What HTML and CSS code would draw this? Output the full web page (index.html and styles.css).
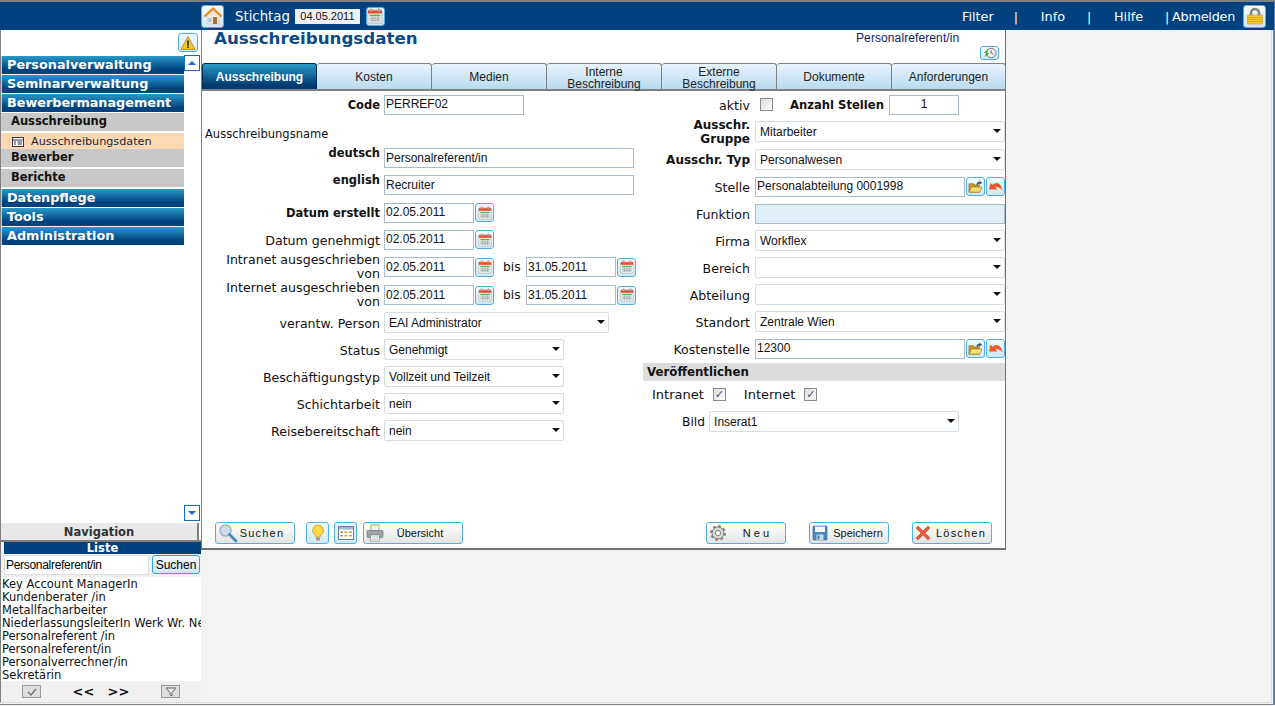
FILE: index.html
```html
<!DOCTYPE HTML>
<html>
<head>
<meta charset="utf-8">
<title>Ausschreibungsdaten</title>
<link rel="stylesheet" href="styles.css">
</head>
<body>
<svg class="defs" width="0" height="0">
  <symbol id="i-home" viewBox="0 0 20 20">
    <path d="M4 9.500 10 4l6 5.500V18H4z" fill="#efe9e0" stroke="#c8b8a0" stroke-width=".5"/>
    <path d="M1.500 10.500 10 2.500l8.500 8" fill="none" stroke="#ee8a20" stroke-width="2.200" stroke-linejoin="round"/>
    <rect x="10" y="11" width="4" height="7" fill="#a8703a"/>
    <rect x="5.500" y="12" width="3" height="4" fill="#8fb4d8"/>
    <path d="M7 12v4M5.500 14h3" stroke="#efe9e0" stroke-width=".5"/>
  </symbol>
  <symbol id="i-cal" viewBox="0 0 16 16">
    <rect x="1" y="2" width="14" height="13" rx="1" fill="#fff" stroke="#8a8a8a" stroke-width=".6"/>
    <rect x="1" y="2.500" width="14" height="3" fill="#e8482e"/>
    <rect x="3.500" y=".5" width="1.500" height="3.500" fill="#a0a0a0"/>
    <rect x="11" y=".5" width="1.500" height="3.500" fill="#a0a0a0"/>
    <rect x="2.500" y="6.500" width="11" height="2" fill="#58b858"/>
    <rect x="2.500" y="8.500" width="11" height="5.500" fill="#dfe6e2"/>
    <path d="M2.500 10.300h11M2.500 12.200h11M5.200 8.500V14M8 8.500V14M10.800 8.500V14" stroke="#8e9a9e" stroke-width=".6"/>
  </symbol>
  <symbol id="i-warn" viewBox="0 0 16 16">
    <path d="M8 1.500 15 14.500H1z" fill="#f6c81e" stroke="#a87a10" stroke-width=".7"/>
    <rect x="7.200" y="5.500" width="1.600" height="5" fill="#222"/>
    <rect x="7.200" y="11.300" width="1.600" height="1.600" fill="#222"/>
  </symbol>
  <symbol id="i-lock" viewBox="0 0 18 18">
    <path d="M5 9V6a4 4 0 0 1 8 0v3" fill="none" stroke="#858585" stroke-width="2.600"/>
    <rect x="1.500" y="8" width="15" height="9" rx="1" fill="#f6cd2e" stroke="#c2950f" stroke-width=".6"/>
    <path d="M2 10.500h14M2 12.500h14M2 14.500h14" stroke="#dba316" stroke-width=".9"/>
  </symbol>
  <symbol id="i-hist" viewBox="0 0 18 14">
    <circle cx="10.500" cy="7" r="5.500" fill="#f0f0f0" stroke="#666" stroke-width="1"/>
    <path d="M10.500 4v3l2.500 1.500" fill="none" stroke="#444" stroke-width=".9"/>
    <path d="M7 2 2 7h2.500L3 12l5-5H5.500z" fill="#3aa520"/>
  </symbol>
  <symbol id="i-folder" viewBox="0 0 16 16">
    <path d="M1 5h5l1 1.500h5V14H1z" fill="#c89a28" stroke="#7a5f18" stroke-width=".6"/>
    <path d="M3.500 8.500H15L12.500 14H1z" fill="#f8de78" stroke="#8a6a10" stroke-width=".6"/>
    <path d="M9 6.500C9 4 10.500 3 12 3V1.500L15 4l-3 2.500V5c-1 0-1.500.500-1.500 1.500z" fill="#3a5a80"/>
  </symbol>
  <symbol id="i-undo" viewBox="0 0 16 16">
    <path d="M1.500 11 2.500 4.500l2.500 2C8.500 3 13.500 4 15 11.500c-2.500-3-5.500-3.500-7.500-3l2 2.500z" fill="#f0552c" stroke="#d84418" stroke-width=".4"/>
  </symbol>
  <symbol id="i-search" viewBox="0 0 20 20">
    <circle cx="7.500" cy="7.500" r="5.500" fill="#ccdcf2" stroke="#a4b6cc" stroke-width="1.600"/>
    <path d="m11.500 11.500 6.500 6.500" stroke="#4a88c0" stroke-width="2.800" stroke-linecap="round"/>
  </symbol>
  <symbol id="i-bulb" viewBox="0 0 14 18">
    <path d="M7 1a5.500 5.500 0 0 0-3 10c.6.500 1 1.200 1 2h4c0-.800.400-1.500 1-2A5.500 5.500 0 0 0 7 1z" fill="#ffd94a" stroke="#c79a10" stroke-width=".8"/>
    <rect x="5" y="13.500" width="4" height="3" rx=".5" fill="#999"/>
  </symbol>
  <symbol id="i-table" viewBox="0 0 16 14">
    <rect x=".5" y=".5" width="15" height="13" fill="#fff" stroke="#607d9c"/>
    <rect x="1" y="1" width="14" height="2.500" fill="#9cbcdc"/>
    <path d="M2.500 5.500h2v1.500h-2z" fill="#d04030"/>
    <path d="M2.500 9h2v1.500h-2z" fill="#40a040"/>
    <path d="M6.500 5.500h3v1.500h-3zM11 5.500h3v1.500h-3zM6.500 9h3v1.500h-3zM11 9h3v1.500h-3z" fill="#c8a830"/>
  </symbol>
  <symbol id="i-print" viewBox="0 0 18 18">
    <rect x="5" y="1" width="8" height="6" fill="#f4f4f4" stroke="#888" stroke-width=".7"/>
    <rect x="1" y="6.500" width="16" height="7" rx="1" fill="#9ea4aa" stroke="#6a7076" stroke-width=".7"/>
    <rect x="4.500" y="11" width="9" height="6" fill="#fff" stroke="#888" stroke-width=".7"/>
    <path d="M6 13h6M6 15h6" stroke="#aaa" stroke-width=".7"/>
  </symbol>
  <symbol id="i-gear" viewBox="0 0 18 18">
    <circle cx="9" cy="9" r="6" fill="#d8d8d8" stroke="#808080" stroke-width="1"/>
    <circle cx="9" cy="9" r="6.800" fill="none" stroke="#808080" stroke-width="2.200" stroke-dasharray="2.700 2.640"/>
    <circle cx="9" cy="9" r="2.600" fill="#fff" stroke="#808080" stroke-width="1"/>
  </symbol>
  <symbol id="i-save" viewBox="0 0 16 16">
    <rect x="1" y="1" width="14" height="14" rx="1" fill="#4f86bd" stroke="#2f5f90" stroke-width=".6"/>
    <rect x="3" y="1.500" width="10" height="5.500" fill="#f2f6fa"/>
    <rect x="4.500" y="9.500" width="7" height="5.500" fill="#c9d9e8"/>
    <rect x="5.500" y="10.500" width="2" height="4" fill="#4f86bd"/>
  </symbol>
  <symbol id="i-cross" viewBox="0 0 16 16">
    <path d="m1 3 2-2 5 5 5-5 2 2-5 5 5 5-2 2-5-5-5 5-2-2 5-5z" fill="#ee5a3a" stroke="#b83418" stroke-width=".5"/>
  </symbol>
  <symbol id="i-list" viewBox="0 0 12 10">
    <rect x=".5" y=".5" width="11" height="9" fill="#fff" stroke="#334"/>
    <path d="M.5 3h11M2 5h2M5.500 5H10M2 7h2M5.500 7H10" stroke="#334"/>
  </symbol>
</svg>

<div class="topbar">
  <button class="icon-btn home"><svg width="20" height="20"><use href="#i-home"/></svg></button>
  <span class="stichtag">Stichtag</span>
  <span class="stichtag-date">04.05.2011</span>
  <button class="icon-btn cal-top"><svg width="16" height="16"><use href="#i-cal"/></svg></button>
  <nav class="topnav">
    <a>Filter</a><span class="sep sep1">|</span>
    <a>Info</a><span class="sep sep2">|</span>
    <a>Hilfe</a><span class="sep sep3">|</span>
    <a class="logout">Abmelden</a>
  </nav>
  <button class="icon-btn lock"><svg width="18" height="18"><use href="#i-lock"/></svg></button>
</div>

<div class="page">
  <aside class="sidebar">
    <div class="nav-panel">
      <div class="warn-row">
        <button class="icon-btn warn"><svg width="16" height="16"><use href="#i-warn"/></svg></button>
      </div>
      <div class="nav-scroll">
        <ul class="menu">
          <li class="m1">Personalverwaltung</li>
          <li class="m1">Seminarverwaltung</li>
          <li class="m1">Bewerbermanagement</li>
          <li class="m2">Ausschreibung</li>
          <li class="m3"><svg width="12" height="10"><use href="#i-list"/></svg>Ausschreibungsdaten</li>
          <li class="m2 m2-tight">Bewerber</li>
          <li class="m2">Berichte</li>
          <li class="m1">Datenpflege</li>
          <li class="m1">Tools</li>
          <li class="m1">Administration</li>
        </ul>
        <div class="scroller">
          <button class="scroll-btn"><span class="tri-up"></span></button>
          <button class="scroll-btn"><span class="tri-down"></span></button>
        </div>
      </div>
      <div class="nav-title">Navigation</div>
    </div>
    <div class="list-panel">
      <div class="list-title">Liste</div>
      <div class="list-search">
        <input class="list-input" value="Personalreferent/in">
        <button class="list-go">Suchen</button>
      </div>
      <ul class="list-items">
        <li>Key Account ManagerIn</li>
        <li>Kundenberater /in</li>
        <li>Metallfacharbeiter</li>
        <li>NiederlassungsleiterIn Werk Wr. Neustadt</li>
        <li>Personalreferent /in</li>
        <li>Personalreferent/in</li>
        <li>Personalverrechner/in</li>
        <li>Sekretärin</li>
      </ul>
      <div class="list-foot">
        <button class="mini-btn">
          <svg width="10" height="8" viewBox="0 0 10 8"><path d="m1 4 3 3 5-6" fill="none" stroke="#777" stroke-width="1.500"/></svg>
        </button>
        <span class="pager">&lt;&lt;</span>
        <span class="pager">&gt;&gt;</span>
        <button class="mini-btn">
          <svg width="12" height="10" viewBox="0 0 12 10"><path d="M1 1h10L7 5.500V9L5 8V5.500z" fill="#eee" stroke="#666"/></svg>
        </button>
      </div>
    </div>
  </aside>

  <main class="main">
    <div class="title-row">
      <h1>Ausschreibungsdaten</h1>
      <div class="title-side">
        <span class="rec-name">Personalreferent/in</span>
        <button class="icon-btn hist"><svg width="16" height="12"><use href="#i-hist"/></svg></button>
      </div>
    </div>

    <div class="tabs">
      <div class="tab active">Ausschreibung</div>
      <div class="tab">Kosten</div>
      <div class="tab">Medien</div>
      <div class="tab two">Interne<br>Beschreibung</div>
      <div class="tab two">Externe<br>Beschreibung</div>
      <div class="tab">Dokumente</div>
      <div class="tab">Anforderungen</div>
    </div>

    <div class="form">
      <div class="col-left">
        <div class="row"><label class="lbl b">Code</label><input class="in w140" value="PERREF02"></div>
        <div class="row row-name"><span class="free-label">Ausschreibungsname</span></div>
        <div class="row top"><label class="lbl b">deutsch</label><input class="in w250" value="Personalreferent/in"></div>
        <div class="row top"><label class="lbl b">english</label><input class="in w250" value="Recruiter"></div>
        <div class="row"><label class="lbl b">Datum erstellt</label><input class="in w90" value="02.05.2011"><button class="icon-btn small"><svg width="14" height="14"><use href="#i-cal"/></svg></button></div>
        <div class="row"><label class="lbl">Datum genehmigt</label><input class="in w90" value="02.05.2011"><button class="icon-btn small"><svg width="14" height="14"><use href="#i-cal"/></svg></button></div>
        <div class="row row28"><label class="lbl tall">Intranet ausgeschrieben von</label><input class="in w90" value="02.05.2011"><button class="icon-btn small"><svg width="14" height="14"><use href="#i-cal"/></svg></button><span class="bis">bis</span><input class="in w90" value="31.05.2011"><button class="icon-btn small"><svg width="14" height="14"><use href="#i-cal"/></svg></button></div>
        <div class="row row28"><label class="lbl tall">Internet ausgeschrieben von</label><input class="in w90" value="02.05.2011"><button class="icon-btn small"><svg width="14" height="14"><use href="#i-cal"/></svg></button><span class="bis">bis</span><input class="in w90" value="31.05.2011"><button class="icon-btn small"><svg width="14" height="14"><use href="#i-cal"/></svg></button></div>
        <div class="row"><label class="lbl">verantw. Person</label><span class="pick w225"><select><option>EAI Administrator</option></select></span></div>
        <div class="row"><label class="lbl">Status</label><span class="pick w180"><select><option>Genehmigt</option></select></span></div>
        <div class="row"><label class="lbl">Beschäftigungstyp</label><span class="pick w180"><select><option>Vollzeit und Teilzeit</option></select></span></div>
        <div class="row"><label class="lbl">Schichtarbeit</label><span class="pick w180"><select><option>nein</option></select></span></div>
        <div class="row"><label class="lbl">Reisebereitschaft</label><span class="pick w180"><select><option>nein</option></select></span></div>
      </div>

      <div class="col-right">
        <div class="row">
          <label class="lbl">aktiv</label>
          <span class="check aktiv"></span>
          <label class="lbl-stellen">Anzahl Stellen</label>
          <input class="in w70 center" value="1">
        </div>
        <div class="row"><label class="lbl b tall">Ausschr. Gruppe</label><span class="pick w250"><select><option>Mitarbeiter</option></select></span></div>
        <div class="row row28 row-typ"><label class="lbl b">Ausschr. Typ</label><span class="pick w250"><select><option>Personalwesen</option></select></span></div>
        <div class="row"><label class="lbl">Stelle</label><input class="in w210" value="Personalabteilung 0001998"><button class="icon-btn tiny"><svg width="15" height="15"><use href="#i-folder"/></svg></button><button class="icon-btn tiny"><svg width="15" height="15"><use href="#i-undo"/></svg></button></div>
        <div class="row"><label class="lbl">Funktion</label><input class="in w250 locked"></div>
        <div class="row"><label class="lbl">Firma</label><span class="pick w250"><select><option>Workflex</option></select></span></div>
        <div class="row"><label class="lbl">Bereich</label><span class="pick w250"><select><option></option></select></span></div>
        <div class="row"><label class="lbl">Abteilung</label><span class="pick w250"><select><option></option></select></span></div>
        <div class="row"><label class="lbl">Standort</label><span class="pick w250"><select><option>Zentrale Wien</option></select></span></div>
        <div class="row"><label class="lbl">Kostenstelle</label><input class="in w210" value="12300"><button class="icon-btn tiny"><svg width="15" height="15"><use href="#i-folder"/></svg></button><button class="icon-btn tiny"><svg width="15" height="15"><use href="#i-undo"/></svg></button></div>
        <div class="band">Veröffentlichen</div>
        <div class="pub-row">
          <span>Intranet</span><span class="check on"></span>
          <span class="pub-second">Internet</span><span class="check on"></span>
        </div>
        <div class="bild-row"><span>Bild</span><span class="pick w250"><select><option>Inserat1</option></select></span></div>
      </div>
    </div>

    <div class="actions">
      <button class="act w80 spaced find"><svg width="20" height="20"><use href="#i-search"/></svg><span>Suchen</span></button>
      <button class="icon-btn act-icon first"><svg width="14" height="18"><use href="#i-bulb"/></svg></button>
      <button class="icon-btn act-icon second"><svg width="16" height="14"><use href="#i-table"/></svg></button>
      <button class="act w100"><svg width="18" height="18"><use href="#i-print"/></svg><span>Übersicht</span></button>
      <button class="act w80 wide push"><svg width="18" height="18"><use href="#i-gear"/></svg><span>N e u</span></button>
      <button class="act w80 gap23"><svg width="16" height="16"><use href="#i-save"/></svg><span>Speichern</span></button>
      <button class="act w80 spaced gap23"><svg width="16" height="16"><use href="#i-cross"/></svg><span>Löschen</span></button>
    </div>
  </main>
</div>
</body>
</html>
```

FILE: styles.css
```css
* {
  box-sizing: border-box;
}
html {
  background: #fff;
}
html, body {
  margin: 0;
}
body {
  height: 705px;
  overflow: hidden;
  background: #f3f3f3;
  border-top: 2px solid #808080;
  border-right: 1px solid #5a7ea6;
  font-family: "DejaVu Sans", Verdana, sans-serif;
  font-size: 12px;
  color: #111;
}
button {
  padding: 0;
  cursor: pointer;
}
ul {
  list-style: none;
  margin: 0;
  padding: 0;
}
.defs {
  display: block;
  height: 0;
}

/* top bar */
.topbar {
  display: flex;
  align-items: center;
  height: 28px;
  padding-left: 201px;
  background: #00427f;
  color: #fff;
  font-size: 12.800px;
}
.icon-btn {
  display: flex;
  align-items: center;
  justify-content: center;
  border: 1px solid #4fb0e4;
  border-radius: 3px;
  background: linear-gradient(#f4fafe, #cfe8f8);
}
.home {
  width: 23px;
  height: 23px;
}
.stichtag {
  margin-left: 11px;
  font-size: 13.300px;
}
.stichtag-date {
  width: 65px;
  height: 15px;
  margin-left: 5px;
  background: #f0f0f4;
  color: #111;
  font-family: "Liberation Sans", Arial, sans-serif;
  font-size: 11px;
  line-height: 15px;
  text-align: center;
}
.cal-top {
  width: 19px;
  height: 19px;
  margin-left: 6px;
}
.topnav {
  display: flex;
  margin-left: auto;
}
.sep {
  width: 1px;
}
.sep1 {
  margin: 0 26px 0 20px;
}
.sep2 {
  margin: 0 26px 0 22px;
}
.sep3 {
  margin: 0 6px 0 22px;
}
.logout {
  letter-spacing: -0.250px;
}
.lock {
  width: 23px;
  height: 23px;
  margin: 0 8px 0 8px;
}

.page {
  display: flex;
  align-items: flex-start;
  height: 675px;
  box-shadow: inset -1px -1px #808080, inset -2px -2px #f3f3f3, inset -3px -3px #dcdcdc;
}

/* left column */
.sidebar {
  display: flex;
  flex-direction: column;
  width: 201px;
  height: 672px;
  border-left: 1px solid #808080;
}
.nav-panel {
  display: flex;
  flex-direction: column;
  height: 510px;
  background: #fff;
}
.warn-row {
  display: flex;
  justify-content: flex-end;
  height: 25px;
  padding: 3px 3px 0 0;
}
.warn {
  width: 20px;
  height: 19px;
}
.nav-scroll {
  display: flex;
  flex: 1;
  min-height: 0;
}
.menu {
  width: 183px;
  padding-top: 1px;
}
.menu li {
  white-space: nowrap;
}
.m1 {
  height: 18px;
  margin-bottom: 1px;
  padding-left: 5px;
  background: linear-gradient(#2a9ac8, #00427f 75%);
  border-left: 1px solid #c8c8c8;
  color: #fff;
  font-size: 12.800px;
  font-weight: bold;
  line-height: 18px;
}
.m2 {
  height: 18px;
  margin-bottom: 2px;
  padding-left: 10px;
  background: #c8c8c8;
  font-size: 11.500px;
  font-weight: bold;
  line-height: 16px;
}
.m2-tight {
  margin-top: -1px;
}
.m3 {
  display: flex;
  align-items: center;
  height: 17px;
  padding-left: 11px;
  background: #fdd8b0;
  color: #223;
  font-size: 11.200px;
}
.m3 svg {
  margin-right: 7px;
}
.scroller {
  display: flex;
  flex-direction: column;
  justify-content: space-between;
  width: 17px;
  margin-bottom: 2px;
}
.scroll-btn {
  display: flex;
  align-items: center;
  justify-content: center;
  width: 16px;
  height: 16px;
  border: 1px solid #1a6ac8;
  background: #fff;
}
.tri-up, .tri-down {
  border-left: 4px solid transparent;
  border-right: 4px solid transparent;
}
.tri-up {
  border-bottom: 4px solid #1a6ac8;
}
.tri-down {
  border-top: 4px solid #1a6ac8;
}
.nav-title {
  width: 198px;
  height: 17px;
  background: #e8e8e8;
  border-right: 2px solid #808080;
  color: #333;
  font-size: 11.500px;
  font-weight: bold;
  line-height: 18px;
  text-align: center;
}
.list-panel {
  display: flex;
  flex: 1;
  flex-direction: column;
  min-height: 0;
  border-top: 2px solid #808080;
  background: #f0f0f0;
}
.list-title {
  height: 12px;
  margin-left: 3px;
  background: #00427f;
  color: #fff;
  font-size: 11.500px;
  font-weight: bold;
  line-height: 13px;
  text-align: center;
}
.list-search {
  display: flex;
  align-items: flex-start;
  justify-content: space-between;
  height: 23px;
  padding: 1px 1px 0 3px;
}
.list-input {
  width: 145px;
  height: 20px;
  border: 1px solid #ddd;
  padding: 0 1px;
  font-family: "Liberation Sans", Arial, sans-serif;
  font-size: 12px;
  letter-spacing: -0.300px;
}
.list-go {
  width: 48px;
  height: 19px;
  border: 1px solid #3f9fd0;
  border-radius: 3px;
  background: linear-gradient(#f4f9fc, #cfe6f5);
  font-family: "Liberation Sans", Arial, sans-serif;
  font-size: 12px;
}
.list-items {
  height: 104px;
  overflow-x: clip;
  padding: 1px 0 0 1px;
  background: #fff;
  font-size: 11.500px;
  line-height: 13px;
  white-space: nowrap;
}
.list-foot {
  display: flex;
  align-items: center;
  height: 21px;
  padding-left: 21px;
}
.mini-btn {
  display: flex;
  align-items: center;
  justify-content: center;
  width: 19px;
  height: 13px;
  border: 1px solid #999;
  background: #ddd;
}
.pager {
  width: 35px;
  font-size: 13px;
  font-weight: bold;
  text-align: center;
}
.pager:first-of-type {
  margin-left: 25px;
}
.pager + .mini-btn {
  margin-left: 25px;
}

/* main panel */
.main {
  display: flex;
  flex-direction: column;
  width: 805px;
  height: 520px;
  background: #fff;
  border-left: 1px solid #808080;
  border-right: 1px solid #707070;
  border-bottom: 2px solid #707070;
}
.title-row {
  display: flex;
  justify-content: space-between;
  height: 33px;
  padding: 0 6px 0 12px;
}
h1 {
  margin: 0;
  color: #0a4a86;
  font-size: 16.700px;
  line-height: 17px;
}
.title-side {
  display: flex;
  flex-direction: column;
  align-items: flex-end;
  padding-top: 1px;
}
.rec-name {
  width: 143px;
  color: #112266;
  font-family: "Liberation Sans", Arial, sans-serif;
  font-size: 12px;
  letter-spacing: 0.100px;
  line-height: 14px;
}
.hist {
  width: 19px;
  height: 14px;
  margin-top: 1px;
}
.tabs {
  display: flex;
  height: 28px;
  border-bottom: 2px solid #808080;
}
.tab {
  display: flex;
  flex: 0 0 115px;
  align-items: center;
  justify-content: center;
  height: 26px;
  border: 1px solid #808080;
  border-bottom: 0;
  border-left-width: 0;
  border-radius: 3px 3px 0 0;
  background: linear-gradient(#e8f4fc, #b8daf0);
  color: #222;
  font-family: "Liberation Sans", Arial, sans-serif;
  font-size: 12px;
  line-height: 12px;
  text-align: center;
  white-space: nowrap;
}
.tab:last-child {
  flex-basis: 114px;
}
.tab.active {
  border: 1px solid #002a50;
  border-bottom: 0;
  background: linear-gradient(#2a9ac8, #003a70 85%);
  color: #fff;
  font-weight: bold;
}
.tab.two {
  padding-top: 3px;
}

/* form */
.form {
  display: flex;
  flex: 1;
  min-height: 0;
}
.col-left {
  width: 441px;
}
.col-right {
  width: 362px;
}
.row {
  display: flex;
  align-items: center;
  height: 27px;
}
.row.top {
  align-items: flex-start;
  padding-top: 3px;
}
.row.top .lbl {
  margin-top: -2px;
  padding-top: 0;
  line-height: 15px;
}
.row28 {
  height: 28px;
}
.row-typ {
  padding-top: 1px;
}
.row-name {
  align-items: flex-end;
  padding-bottom: 4px;
}
.free-label {
  margin-left: 3px;
  font-size: 11.500px;
}
.lbl {
  flex: 0 0 178px;
  padding-top: 2px;
  font-size: 12.600px;
  line-height: 13px;
  text-align: right;
}
.col-left .lbl {
  margin-right: 4px;
}
.col-right .lbl {
  flex-basis: 107px;
  margin-right: 5px;
  padding-top: 1px;
}
.b {
  font-weight: bold;
}
.col-left .b {
  font-size: 11.500px;
}
.col-right .b {
  font-size: 12px;
}
.lbl.tall, .col-right .lbl.tall {
  padding-top: 0;
  line-height: 14px;
}
.in {
  height: 20px;
  border: 1px solid #a8bccc;
  padding: 0 1px 1px;
  background: #fff;
  color: #111;
  font-family: "Liberation Sans", Arial, sans-serif;
  font-size: 12px;
}
.w70 {
  width: 70px;
}
.w90 {
  width: 90px;
}
.w140 {
  width: 140px;
}
.w210 {
  width: 210px;
}
.w250 {
  width: 250px;
}
.center {
  text-align: center;
}
.locked {
  background: #e0eef8;
}
.small, .tiny {
  width: 19px;
  height: 19px;
  margin-left: 1px;
}
.bis {
  width: 32px;
  padding-left: 9px;
  font-size: 12.300px;
}
.pick {
  position: relative;
  display: block;
  height: 21px;
}
.pick::after {
  content: "";
  position: absolute;
  top: 8px;
  right: 4px;
  border-left: 4px solid transparent;
  border-right: 4px solid transparent;
  border-top: 4px solid #111;
}
.pick select {
  appearance: none;
  display: block;
  width: 100%;
  height: 21px;
  border: 1px solid #d4dde4;
  border-radius: 2px;
  padding: 0 4px;
  background: #fff;
  color: #111;
  font-family: "Liberation Sans", Arial, sans-serif;
  font-size: 12px;
}
.w180 {
  width: 180px;
}
.w225 {
  width: 225px;
}
.check {
  display: inline-block;
  width: 13px;
  height: 13px;
  border: 1px solid #8a8a8a;
  background: linear-gradient(135deg, #ddd, #fff);
}
.aktiv {
  margin-left: 5px;
}
.check.on {
  color: #3a4a90;
  font-size: 11px;
  line-height: 11px;
  text-align: center;
}
.check.on::before {
  content: "✓";
}
.lbl-stellen {
  width: 99px;
  margin-left: 17px;
  font-size: 11.600px;
  font-weight: bold;
  white-space: nowrap;
}
.band {
  height: 18px;
  margin-top: 1px;
  padding-left: 4px;
  background: #dcdcdc;
  font-size: 11.800px;
  font-weight: bold;
  line-height: 18px;
}
.pub-row {
  display: flex;
  align-items: center;
  height: 26px;
  padding-left: 9px;
  font-size: 13px;
}
.pub-row .check {
  margin-left: 9px;
}
.pub-second {
  margin-left: 18px;
}
.bild-row {
  display: flex;
  align-items: center;
  gap: 4px;
  height: 28px;
  padding: 1px 0 0 39px;
  font-size: 12.300px;
}

/* bottom buttons */
.actions {
  display: flex;
  align-items: center;
  height: 26px;
  margin-bottom: 2px;
  padding: 0 13px;
}
.act {
  display: flex;
  align-items: center;
  height: 22px;
  border: 1px solid #4fb0e4;
  border-radius: 3px;
  padding: 0 0 0 2px;
  background: linear-gradient(#fff, #e4e4e4);
  color: #111;
  font-family: "Liberation Sans", Arial, sans-serif;
  font-size: 11px;
}
.act span {
  flex: 1;
  text-align: center;
}
.w80 {
  width: 80px;
}
.w100 {
  width: 100px;
  margin-left: 6px;
}
.w100 span {
  padding-right: 6px;
}
.spaced span {
  letter-spacing: 1.200px;
}
.find span {
  padding-right: 8px;
}
.act-icon {
  width: 23px;
  height: 22px;
}
.first {
  margin-left: 11px;
}
.second {
  margin-left: 5px;
}
.push {
  margin-left: auto;
}
.gap23 {
  margin-left: 23px;
}
```
